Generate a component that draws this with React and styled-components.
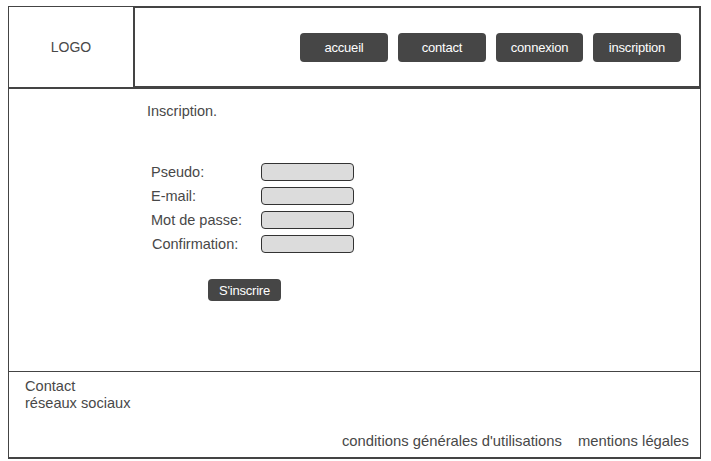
import React from 'react';
import styled, { createGlobalStyle } from 'styled-components';

const GlobalStyle = createGlobalStyle`
  * { box-sizing: border-box; }
  body {
    margin: 0;
    background: #fff;
    font-family: "Liberation Sans", Arial, sans-serif;
    color: #484848;
  }
`;

const Frame = styled.div`
  width: 693px;
  margin: 6px 0 0 8px;
`;

const Header = styled.header`
  display: flex;
  height: 82px;
`;

const LogoBox = styled.div`
  width: 125px;
  border: 1px solid #444;
  border-right: none;
  display: flex;
  align-items: center;
  justify-content: center;
  font-size: 14px;
`;

const Nav = styled.nav`
  flex: 1;
  border: 2px solid #444;
  display: flex;
  align-items: center;
  justify-content: flex-end;
  gap: 10px;
  padding-right: 18px;
`;

const DarkButton = styled.button`
  width: ${({ $w }) => $w || 88}px;
  height: ${({ $h }) => $h || 29}px;
  border: none;
  border-radius: 4px;
  background: #464646;
  color: #fff;
  font-family: "Liberation Sans", Arial, sans-serif;
  font-size: 13px;
  letter-spacing: -0.2px;
  padding: 0;
  cursor: pointer;
`;

const Main = styled.main`
  height: 283px;
  border: 1px solid #444;
  border-bottom: none;
  padding: 14px 0 0 138px;
`;

const Title = styled.p`
  margin: 0;
  font-size: 14.5px;
  line-height: 17px;
`;

const Form = styled.form`
  margin: 43px 0 0 4px;
  display: grid;
  grid-template-columns: 110px 93px;
  row-gap: 6px;
  align-items: center;
`;

const Label = styled.label`
  font-size: 14.5px;
  line-height: 18px;
  padding-left: ${({ $shift }) => $shift || 0}px;
`;

const Field = styled.input`
  width: 93px;
  height: 18px;
  border: 1px solid #333;
  border-radius: 4px;
  background: #dcdcdc;
  padding: 0;
`;

const SubmitRow = styled.div`
  grid-column: 1 / -1;
  margin: 20px 0 0 57px;
`;

const Footer = styled.footer`
  height: 88px;
  border: 1px solid #444;
  border-bottom-width: 2px;
  padding: 6px 11px 7px 16px;
  display: flex;
  flex-direction: column;
  justify-content: space-between;
  font-size: 14.6px;
  line-height: 17px;
`;

const FooterLinks = styled.div`
  display: flex;
  justify-content: flex-end;
  gap: 16px;
  font-size: 14.8px;
`;

export default function App() {
  return (
    <>
      <GlobalStyle />
      <Frame>
        <Header>
          <LogoBox>LOGO</LogoBox>
          <Nav>
            <DarkButton>accueil</DarkButton>
            <DarkButton>contact</DarkButton>
            <DarkButton $w={87}>connexion</DarkButton>
            <DarkButton>inscription</DarkButton>
          </Nav>
        </Header>
        <Main>
          <Title>Inscription.</Title>
          <Form onSubmit={(e) => e.preventDefault()}>
            <Label>Pseudo:</Label>
            <Field type="text" />
            <Label>E-mail:</Label>
            <Field type="email" />
            <Label>Mot de passe:</Label>
            <Field type="password" />
            <Label $shift={1}>Confirmation:</Label>
            <Field type="password" />
            <SubmitRow>
              <DarkButton type="submit" $w={73} $h={22}>S'inscrire</DarkButton>
            </SubmitRow>
          </Form>
        </Main>
        <Footer>
          <div>
            Contact
            <br />
            réseaux sociaux
          </div>
          <FooterLinks>
            <span>conditions générales d'utilisations</span>
            <span>mentions légales</span>
          </FooterLinks>
        </Footer>
      </Frame>
    </>
  );
}
